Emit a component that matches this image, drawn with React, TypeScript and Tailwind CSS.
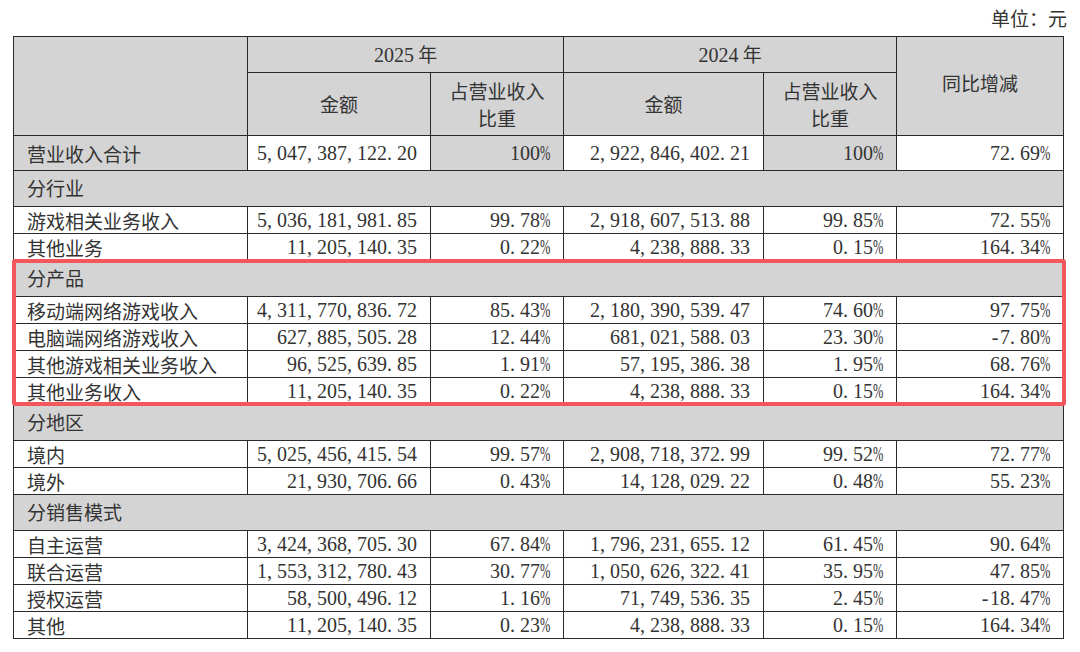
const CJK = "font-['Noto_Sans_CJK_SC',sans-serif]";

type Row =
  | { kind: "section"; label: string }
  | { kind: "data"; cells: string[]; total?: boolean };

const rows: Row[] = [
  { kind: "data", total: true, cells: ["营业收入合计", "5,047,387,122.20", "100%", "2,922,846,402.21", "100%", "72.69%"] },
  { kind: "section", label: "分行业" },
  { kind: "data", cells: ["游戏相关业务收入", "5,036,181,981.85", "99.78%", "2,918,607,513.88", "99.85%", "72.55%"] },
  { kind: "data", cells: ["其他业务", "11,205,140.35", "0.22%", "4,238,888.33", "0.15%", "164.34%"] },
  { kind: "section", label: "分产品" },
  { kind: "data", cells: ["移动端网络游戏收入", "4,311,770,836.72", "85.43%", "2,180,390,539.47", "74.60%", "97.75%"] },
  { kind: "data", cells: ["电脑端网络游戏收入", "627,885,505.28", "12.44%", "681,021,588.03", "23.30%", "-7.80%"] },
  { kind: "data", cells: ["其他游戏相关业务收入", "96,525,639.85", "1.91%", "57,195,386.38", "1.95%", "68.76%"] },
  { kind: "data", cells: ["其他业务收入", "11,205,140.35", "0.22%", "4,238,888.33", "0.15%", "164.34%"] },
  { kind: "section", label: "分地区" },
  { kind: "data", cells: ["境内", "5,025,456,415.54", "99.57%", "2,908,718,372.99", "99.52%", "72.77%"] },
  { kind: "data", cells: ["境外", "21,930,706.66", "0.43%", "14,128,029.22", "0.48%", "55.23%"] },
  { kind: "section", label: "分销售模式" },
  { kind: "data", cells: ["自主运营", "3,424,368,705.30", "67.84%", "1,796,231,655.12", "61.45%", "90.64%"] },
  { kind: "data", cells: ["联合运营", "1,553,312,780.43", "30.77%", "1,050,626,322.41", "35.95%", "47.85%"] },
  { kind: "data", cells: ["授权运营", "58,500,496.12", "1.16%", "71,749,536.35", "2.45%", "-18.47%"] },
  { kind: "data", cells: ["其他", "11,205,140.35", "0.23%", "4,238,888.33", "0.15%", "164.34%"] },
];

// half-width cells, like the SimSun digits in the report
function Num({ value }: { value: string }) {
  return (
    <span className="font-['Liberation_Serif',serif] text-[20px] whitespace-nowrap">
      {value.split("").map((ch, i) => {
        if (ch === "," || ch === ".")
          return (
            <span key={i} className="inline-block w-[10px] text-left">
              {ch}
            </span>
          );
        if (ch === "%")
          return (
            <span key={i} className="inline-block w-[10px] text-left">
              <span className="inline-block origin-left scale-x-[0.62]">%</span>
            </span>
          );
        return (
          <span key={i} className="inline-block w-[10px] text-center">
            {ch}
          </span>
        );
      })}
    </span>
  );
}

const bd = "border border-[#2a2a2a]";
const grey = "bg-[#d4d4d4]";

export default function App() {
  return (
    <div className="relative w-[1080px] h-[652px] bg-white text-[#333] overflow-hidden">
      <div className={`h-[36px] flex items-center justify-end pr-[13px] text-[19px] ${CJK}`}>
        单位：元
      </div>

      <table className="ml-[13px] w-[1050px] table-fixed border-collapse">
        <colgroup>
          <col className="w-[234px]" />
          <col className="w-[183px]" />
          <col className="w-[133px]" />
          <col className="w-[200px]" />
          <col className="w-[133px]" />
          <col className="w-[167px]" />
        </colgroup>
        <thead>
          <tr className="h-[36px]">
            <th rowSpan={2} className={`${bd} ${grey}`} />
            <th colSpan={2} className={`${bd} ${grey} font-normal text-[19px] ${CJK}`}>
              <span className="font-['Liberation_Serif',serif] text-[20px]">2025</span> 年
            </th>
            <th colSpan={2} className={`${bd} ${grey} font-normal text-[19px] ${CJK}`}>
              <span className="font-['Liberation_Serif',serif] text-[20px]">2024</span> 年
            </th>
            <th rowSpan={2} className={`${bd} ${grey} font-normal text-[19px] ${CJK} pb-[6px]`}>
              同比增减
            </th>
          </tr>
          <tr className="h-[63px]">
            <th className={`${bd} ${grey} font-normal text-[19px] ${CJK}`}>金额</th>
            <th className={`${bd} ${grey} font-normal text-[19px] leading-[27px] ${CJK}`}>
              占营业收入
              <br />
              比重
            </th>
            <th className={`${bd} ${grey} font-normal text-[19px] ${CJK}`}>金额</th>
            <th className={`${bd} ${grey} font-normal text-[19px] leading-[27px] ${CJK}`}>
              占营业收入
              <br />
              比重
            </th>
          </tr>
        </thead>
        <tbody>
          {rows.map((r, i) =>
            r.kind === "section" ? (
              <tr key={i} className="h-[36px]">
                <td colSpan={6} className={`${bd} ${grey} pl-[13px] text-[19px] ${CJK}`}>
                  {r.label}
                </td>
              </tr>
            ) : (
              <tr key={i} className={r.total ? "h-[35px]" : "h-[27px]"}>
                <td className={`${bd} ${r.total ? grey : ""} pl-[13px] text-[19px] leading-none whitespace-nowrap ${CJK}`}>
                  {r.cells[0]}
                </td>
                {r.cells.slice(1).map((c, j) => (
                  <td
                    key={j}
                    className={`${bd} ${r.total && (j === 1 || j === 3) ? grey : ""} pr-[13px] text-right leading-none`}
                  >
                    <Num value={c} />
                  </td>
                ))}
              </tr>
            )
          )}
        </tbody>
      </table>

      {/* highlight around 分产品 */}
      <div className="absolute left-[12px] top-[259px] w-[1054px] h-[147px] border-[4px] border-[#f1575b] rounded-[3px] pointer-events-none" />
    </div>
  );
}
